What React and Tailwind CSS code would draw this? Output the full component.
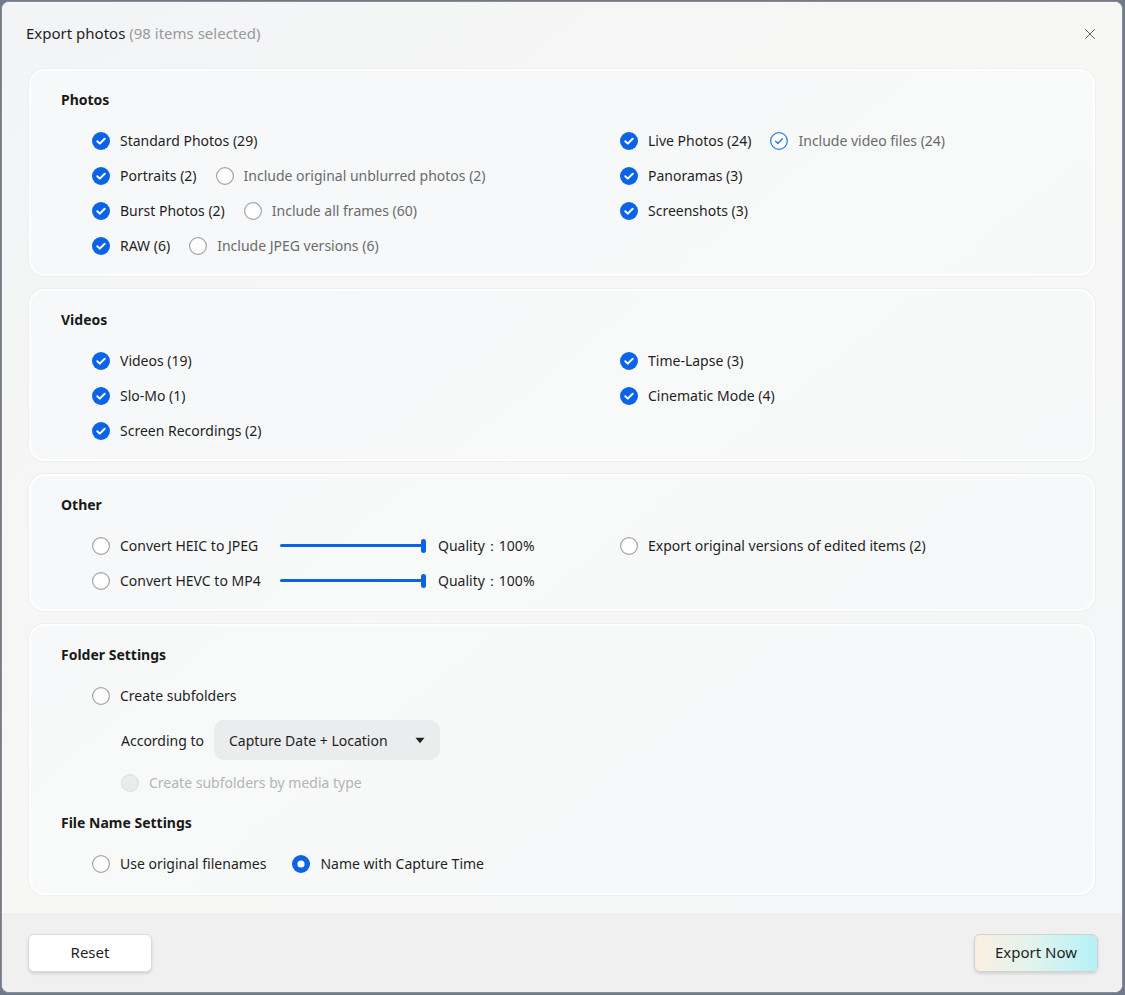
import { X } from "lucide-react";

const font = { fontFamily: '"Noto Sans", "Liberation Sans", sans-serif' };

function Check({ state = "off", disabled }) {
  if (state === "on") {
    return (
      <svg width="18" height="18" viewBox="0 0 18 18" className="shrink-0">
        <circle cx="9" cy="9" r="9" fill="#0b63e5" />
        <path d="M5.3 9.2l2.5 2.4 4.9-4.9" fill="none" stroke="white" strokeWidth="2" strokeLinecap="round" strokeLinejoin="round" />
      </svg>
    );
  }
  if (state === "outline") {
    return (
      <svg width="18" height="18" viewBox="0 0 18 18" className="shrink-0">
        <circle cx="9" cy="9" r="8.3" fill="white" stroke="#2f7be8" strokeWidth="1.3" />
        <path d="M5.6 9.2l2.3 2.2 4.5-4.6" fill="none" stroke="#2f7be8" strokeWidth="1.4" strokeLinecap="round" strokeLinejoin="round" />
      </svg>
    );
  }
  if (state === "radio") {
    return (
      <svg width="18" height="18" viewBox="0 0 18 18" className="shrink-0">
        <circle cx="9" cy="9" r="9" fill="#0b63e5" />
        <circle cx="9" cy="9" r="3.6" fill="white" />
      </svg>
    );
  }
  return (
    <svg width="18" height="18" viewBox="0 0 18 18" className="shrink-0">
      <circle
        cx="9"
        cy="9"
        r="8.4"
        fill={disabled ? "#ebeced" : "white"}
        stroke={disabled ? "#e0e1e3" : "#a3a3a3"}
        strokeWidth="1.2"
      />
    </svg>
  );
}

function Option({ label, state, sub, disabled }) {
  return (
    <div className="flex items-center gap-[10px]">
      <Check state={state} disabled={disabled} />
      <span className={sub ? "text-[#6b6b6b]" : disabled ? "text-[#b5b5b5]" : "text-[#1f1f1f]"}>{label}</span>
    </div>
  );
}

function Row({ children }) {
  return <div className="flex h-[35px] items-center gap-[19px]">{children}</div>;
}

function Card({ title, children }) {
  return (
    <section className="rounded-[16px] border-2 border-white bg-[#f8f9fa]/80 pb-[11px] pl-[30px] pr-[30px] pt-[18px] shadow-[0_0_0_1px_rgba(230,232,235,0.5)]">
      <h3 className="h-[22px] text-[14px] font-bold leading-[22px] text-[#1a1a1a]">{title}</h3>
      <div className="mt-[12px] pl-[31px]">{children}</div>
    </section>
  );
}

function Slider() {
  return (
    <div className="relative flex h-[16px] w-[146px] items-center">
      <div className="h-[3px] w-full rounded-full bg-[#0b63e5]" />
      <div className="absolute right-0 top-[1px] h-[14px] w-[5px] rounded-[3px] bg-[#0b63e5]" />
    </div>
  );
}

export default function App() {
  return (
    <div className="h-[995px] w-[1125px] bg-[#6f7b8c] p-[1px] pr-[2px] pb-[2px]" style={font}>
      <div className="flex h-full flex-col overflow-hidden rounded-[8px] border border-[#8d8d8d] bg-[#f3f4f6] text-[14px] text-[#1f1f1f]">
        <div className="flex-1 bg-gradient-to-br from-[#f3f4f6] via-[#f7f7f5] to-[#f4f6f8]">
          <header className="flex h-[67px] items-center justify-between pb-[4px] pl-[24px] pr-[23px]">
            <h2 className="text-[15px] text-[#1f1f1f]">
              Export photos <span className="text-[#9a9a9a]">(98 items selected)</span>
            </h2>
            <X size={18} strokeWidth={1.2} className="text-[#555]" />
          </header>

          <div className="flex flex-col gap-[13px] pl-[27px] pr-[27px]">
            <Card title="Photos">
              <div className="grid grid-cols-[528px_1fr]">
                <div>
                  <Row>
                    <Option label="Standard Photos (29)" state="on" />
                  </Row>
                  <Row>
                    <Option label="Portraits (2)" state="on" />
                    <Option label="Include original unblurred photos (2)" sub />
                  </Row>
                  <Row>
                    <Option label="Burst Photos (2)" state="on" />
                    <Option label="Include all frames (60)" sub />
                  </Row>
                  <Row>
                    <Option label="RAW (6)" state="on" />
                    <Option label="Include JPEG versions (6)" sub />
                  </Row>
                </div>
                <div>
                  <Row>
                    <Option label="Live Photos (24)" state="on" />
                    <Option label="Include video files (24)" state="outline" sub />
                  </Row>
                  <Row>
                    <Option label="Panoramas (3)" state="on" />
                  </Row>
                  <Row>
                    <Option label="Screenshots (3)" state="on" />
                  </Row>
                </div>
              </div>
            </Card>

            <Card title="Videos">
              <div className="grid grid-cols-[528px_1fr]">
                <div>
                  <Row>
                    <Option label="Videos (19)" state="on" />
                  </Row>
                  <Row>
                    <Option label="Slo-Mo (1)" state="on" />
                  </Row>
                  <Row>
                    <Option label="Screen Recordings (2)" state="on" />
                  </Row>
                </div>
                <div>
                  <Row>
                    <Option label="Time-Lapse (3)" state="on" />
                  </Row>
                  <Row>
                    <Option label="Cinematic Mode (4)" state="on" />
                  </Row>
                </div>
              </div>
            </Card>

            <Card title="Other">
              <div className="grid grid-cols-[528px_1fr]">
                <div>
                  <div className="grid h-[35px] grid-cols-[188px_158px_1fr] items-center">
                    <Option label="Convert HEIC to JPEG" />
                    <Slider />
                    <span>Quality：100%</span>
                  </div>
                  <div className="grid h-[35px] grid-cols-[188px_158px_1fr] items-center">
                    <Option label="Convert HEVC to MP4" />
                    <Slider />
                    <span>Quality：100%</span>
                  </div>
                </div>
                <div>
                  <Row>
                    <Option label="Export original versions of edited items (2)" />
                  </Row>
                </div>
              </div>
            </Card>

            <section className="rounded-[16px] border-2 border-white bg-[#f8f9fa]/80 pb-[12px] pl-[30px] pr-[30px] pt-[18px] shadow-[0_0_0_1px_rgba(230,232,235,0.5)]">
              <h3 className="h-[22px] text-[14px] font-bold leading-[22px] text-[#1a1a1a]">Folder Settings</h3>
              <div className="mt-[12px] pl-[31px]">
                <Row>
                  <Option label="Create subfolders" />
                </Row>
                <div className="mt-[7px] flex h-[40px] items-center gap-[10px] pl-[29px]">
                  <span>According to</span>
                  <div className="flex h-[40px] w-[226px] items-center justify-between rounded-[10px] bg-[#ebeced] pl-[15px] pr-[15px]">
                    <span>Capture Date + Location</span>
                    <svg width="10" height="7" viewBox="0 0 10 7">
                      <path d="M0.5 0.8h9L5 6.2z" fill="#222" />
                    </svg>
                  </div>
                </div>
                <div className="mt-[5px] flex h-[35px] items-center pl-[29px]">
                  <Option label="Create subfolders by media type" disabled />
                </div>
              </div>
              <h3 className="mt-[12px] h-[22px] text-[14px] font-bold leading-[22px] text-[#1a1a1a]">File Name Settings</h3>
              <div className="mt-[12px] pl-[31px]">
                <div className="flex h-[35px] items-center gap-[26px]">
                  <Option label="Use original filenames" />
                  <Option label="Name with Capture Time" state="radio" />
                </div>
              </div>
            </section>
          </div>
        </div>

        <footer className="flex h-[80px] items-center justify-between border-t border-[#f7f8f9] bg-[#f0f0f1] pl-[26px] pr-[24px]">
          <button className="h-[38px] w-[124px] rounded-[6px] border border-[#dadada] bg-white text-[15px] text-[#1f1f1f] shadow-[0_2px_3px_rgba(0,0,0,0.12)]">
            Reset
          </button>
          <button className="h-[38px] w-[124px] rounded-[6px] border border-[#d2d2d2] bg-gradient-to-r from-[#fcefe2] via-[#dff3ee] to-[#b4f1f6] text-[15px] text-[#1f1f1f] shadow-[0_2px_3px_rgba(0,0,0,0.12)]">
            Export Now
          </button>
        </footer>
      </div>
    </div>
  );
}
